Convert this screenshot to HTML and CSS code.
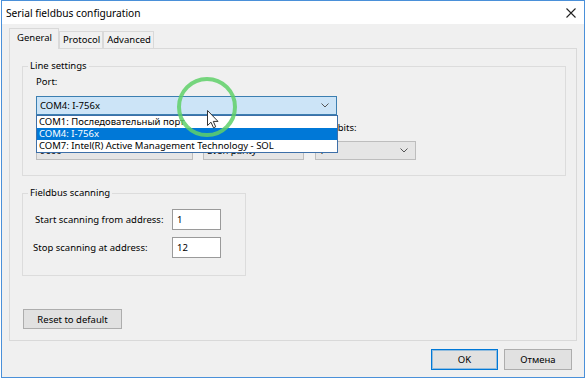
FILE: index.html
```html
<!DOCTYPE html>
<html lang="en">
<head>
    <meta charset="UTF-8">
    <title>Serial fieldbus configuration</title>
    <link rel="stylesheet" href="styles.css">
</head>
<body>
    <div class="window">
        <!-- Title bar -->
        <div class="titlebar">
            <span class="title">Serial fieldbus configuration</span>
            <svg class="close-icon" width="10" height="10" viewBox="0 0 10 10">
                <path d="M0.5 0.5 L9.5 9.5 M9.5 0.5 L0.5 9.5" stroke="#222" stroke-width="1.1" fill="none"/>
            </svg>
        </div>

        <div class="client">
            <!-- Tabs -->
            <div class="tabs">
                <div class="tab active">General</div>
                <div class="tab">Protocol</div>
                <div class="tab">Advanced</div>
            </div>

            <div class="panel">
                <!-- Line settings group -->
                <fieldset class="group line-settings">
                    <legend>Line settings</legend>
                    <div class="group-body">
                        <div class="field-label">Port:</div>
                        <div class="combo-wrap">
                            <div class="combo open">
                                <span>COM4: I-756x</span>
                                <svg class="chevron" width="8" height="5" viewBox="0 0 8 5"><path d="M0.5 0.5 L4 4 L7.5 0.5" stroke="#555" fill="none"/></svg>
                            </div>
                            <ul class="droplist">
                                <li>COM1: Последовательный порт</li>
                                <li class="selected">COM4: I-756x</li>
                                <li>COM7: Intel(R) Active Management Technology - SOL</li>
                            </ul>
                            <svg class="highlight" width="64" height="64" viewBox="0 0 64 64">
                                <circle cx="32" cy="32" r="28" fill="none" stroke="#5fd068" stroke-opacity="0.85" stroke-width="4"/>
                            </svg>
                            <svg class="cursor" width="12" height="19" viewBox="0 0 12 19">
                                <path d="M0.5 0.5 L0.5 15.5 L4 12.2 L6.5 17.8 L8.7 16.8 L6.3 11.4 L11 11.4 Z" fill="#fff" stroke="#333" stroke-width="1" stroke-linejoin="round"/>
                            </svg>
                        </div>
                        <div class="combo-row">
                            <div class="col col-baud">
                                <div class="field-label">Baud rate:</div>
                                <div class="combo">
                                    <span>9600</span>
                                    <svg class="chevron" width="8" height="5" viewBox="0 0 8 5"><path d="M0.5 0.5 L4 4 L7.5 0.5" stroke="#555" fill="none"/></svg>
                                </div>
                            </div>
                            <div class="col col-parity">
                                <div class="field-label">Parity:</div>
                                <div class="combo">
                                    <span>Even parity</span>
                                    <svg class="chevron" width="8" height="5" viewBox="0 0 8 5"><path d="M0.5 0.5 L4 4 L7.5 0.5" stroke="#555" fill="none"/></svg>
                                </div>
                            </div>
                            <div class="col col-stop">
                                <div class="field-label">Stop bits:</div>
                                <div class="combo">
                                    <span>1</span>
                                    <svg class="chevron" width="8" height="5" viewBox="0 0 8 5"><path d="M0.5 0.5 L4 4 L7.5 0.5" stroke="#555" fill="none"/></svg>
                                </div>
                            </div>
                        </div>
                    </div>
                </fieldset>

                <!-- Fieldbus scanning group -->
                <fieldset class="group scanning">
                    <legend>Fieldbus scanning</legend>
                    <div class="group-body">
                        <div class="scan-row">
                            <span class="scan-label">Start scanning from address:</span>
                            <input class="text-input" type="text" value="1">
                        </div>
                        <div class="scan-row">
                            <span class="scan-label stop">Stop scanning at address:</span>
                            <input class="text-input" type="text" value="12">
                        </div>
                    </div>
                </fieldset>

                <button class="btn reset">Reset to default</button>
            </div>

            <!-- Dialog buttons -->
            <div class="footer">
                <button class="btn ok">OK</button>
                <button class="btn cancel">Отмена</button>
            </div>
        </div>
    </div>
</body>
</html>
```

FILE: styles.css
```css
* {
    box-sizing: border-box;
}

body {
    margin: 0;
    background-color: #fff;
    font-family: "Noto Sans", "Liberation Sans", sans-serif;
    font-size: 9.5px;
    color: #000;
}

.window {
    margin-left: 1px;
    width: 584px;
    height: 378px;
    border: 1px solid #4a90d9;
    background-color: #f0f0f0;
    display: flex;
    flex-direction: column;
}

.titlebar {
    height: 23px;
    background-color: #fff;
    display: flex;
    align-items: center;
    justify-content: space-between;
    padding: 0 8px 0 4px;
}

.title {
    font-size: 10.2px;
}

.client {
    flex: 1;
    display: flex;
    flex-direction: column;
    padding: 0 7px;
}

/* Tabs */
.tabs {
    display: flex;
    align-items: flex-end;
    height: 21px;
    margin-top: 4px;
    margin-bottom: -1px;
    position: relative;
    z-index: 1;
}

.tab {
    height: 17px;
    margin-bottom: 1px;
    padding: 0 2px 0 3px;
    border: 1px solid #d9d9d9;
    border-bottom: none;
    line-height: 15px;
    background-color: #f0f0f0;
}

.tab.active {
    height: 21px;
    margin-bottom: 0;
    line-height: 18px;
    padding: 0 6px 0 7px;
}

.panel {
    flex: 1;
    display: flex;
    flex-direction: column;
    border: 1px solid #d9d9d9;
    padding: 10px 10px 11px 12px;
}

/* Group boxes */
.group {
    margin: 0;
    padding: 0;
    min-width: 0;
    border: 1px solid #dcdcdc;
}

.group legend {
    margin-left: 5px;
    padding: 0 2px;
    line-height: 14px;
}

.line-settings .group-body {
    padding: 2px 12px 15px 13px;
}

.field-label {
    line-height: 14px;
}

.combo-wrap {
    position: relative;
    width: 301px;
    margin-top: 7px;
}

.combo {
    height: 19px;
    border: 1px solid #bdbdbd;
    background-color: #e5e5e5;
    display: flex;
    align-items: center;
    justify-content: space-between;
    padding: 0 7px 0 3px;
    white-space: nowrap;
}

.combo.open {
    border-color: #3c7fb1;
    background-color: #cce4f7;
}

.droplist {
    position: absolute;
    top: 19px;
    left: 0;
    width: 302px;
    margin: 0;
    padding: 0;
    list-style: none;
    background-color: #fff;
    border: 1px solid #3d6fa8;
    z-index: 2;
}

.droplist li {
    height: 12px;
    line-height: 12px;
    padding-left: 2px;
    white-space: nowrap;
}

.droplist li.selected {
    background-color: #0078d7;
    color: #fff;
}

.highlight {
    position: absolute;
    left: 139px;
    top: -21px;
    z-index: 3;
}

.cursor {
    position: absolute;
    left: 171px;
    top: 14px;
    z-index: 4;
}

.combo-row {
    display: flex;
    margin-top: 6px;
}

.combo-row .combo {
    margin-top: 6px;
}

.col-baud {
    width: 157px;
    margin-right: 10px;
}

.col-parity {
    width: 101px;
    margin-right: 11px;
}

.col-stop {
    width: 101px;
}

/* Fieldbus scanning */
.scanning {
    width: 224px;
    margin-top: 10px;
}

.scanning .group-body {
    padding: 9px 0 17px 12px;
}

.scan-row {
    display: flex;
    align-items: center;
}

.scan-row + .scan-row {
    margin-top: 7px;
}

.scan-label {
    width: 137px;
}

.scan-label.stop {
    margin-left: -2px;
    width: 139px;
}

.text-input {
    width: 49px;
    height: 21px;
    border: 1px solid #9a9a9a;
    background-color: #fff;
    padding: 0 4px;
    font-family: inherit;
    font-size: inherit;
    color: #000;
    outline: none;
}

/* Buttons */
.btn {
    height: 20px;
    border: 1px solid #adadad;
    background-color: #e1e1e1;
    font-family: inherit;
    font-size: inherit;
    color: #000;
    padding: 0;
}

.reset {
    width: 99px;
    margin-top: auto;
    margin-left: 1px;
}

.footer {
    display: flex;
    justify-content: flex-end;
    gap: 6px;
    padding: 8px 5px 7px 0;
}

.footer .btn {
    height: 21px;
}

.ok {
    width: 67px;
    border-color: #0078d7;
    box-shadow: inset 0 0 0 1px rgba(0, 120, 215, 0.35);
}

.cancel {
    width: 68px;
}
```
